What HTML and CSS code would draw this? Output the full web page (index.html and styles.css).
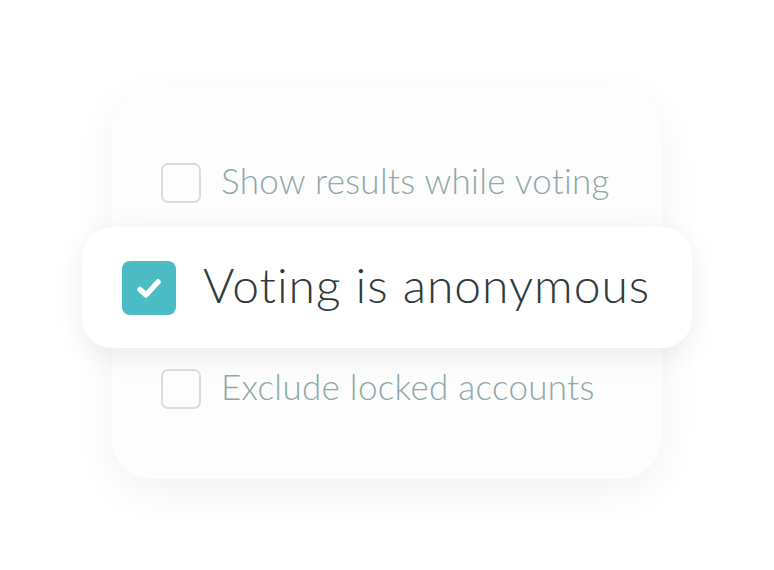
FILE: index.html
```html
<!DOCTYPE html>
<html>
<head>
<meta charset="utf-8">
<link rel="stylesheet" href="styles.css">
</head>
<body>
<div class="stage">
  <div class="card">
    <div class="option">
      <span class="box"></span>
      <span class="label">Show results while voting</span>
    </div>
    <div class="option option--active">
      <span class="box box--checked">
        <svg viewBox="0 0 54 54" width="54" height="54"><path d="M18 28.5 L24 34 L36 21" fill="none" stroke="#fff" stroke-width="5.5" stroke-linecap="round" stroke-linejoin="round"/></svg>
      </span>
      <span class="label label--active">Voting is anonymous</span>
    </div>
    <div class="option">
      <span class="box"></span>
      <span class="label">Exclude locked accounts</span>
    </div>
  </div>
</div>
</body>
</html>
```
FILE: styles.css
```css
html, body {
  margin: 0;
  padding: 0;
  background: #ffffff;
}
body {
  width: 774px;
  height: 570px;
  overflow: hidden;
  font-family: Lato, "Open Sans", sans-serif;
}
.stage {
  padding: 90px 0 0 112px;
}
.card {
  width: 549px;
  height: 389px;
  box-sizing: border-box;
  background: #fdfdfd;
  border-radius: 40px;
  box-shadow: 0 12px 44px rgba(0, 0, 0, 0.055);
  padding: 73px 0 0 49px;
  display: flex;
  flex-direction: column;
}
.option {
  display: flex;
  align-items: center;
  height: 40px;
}
.box {
  width: 40px;
  height: 40px;
  box-sizing: border-box;
  border: 2px solid #dcdcdc;
  border-radius: 7px;
  background: #fdfdfd;
  flex: none;
}
.label {
  margin-left: 20px;
  padding-bottom: 7px;
  font-size: 35px;
  line-height: 40px;
  font-weight: 300;
  color: #8fa8aa;
  letter-spacing: 0.3px;
  white-space: nowrap;
}
.option--active {
  margin: 24px -31px 21px -79px;
  height: 121px;
  padding-left: 40px;
  background: #ffffff;
  border-radius: 30px;
  box-shadow: 0 8px 30px rgba(0, 0, 0, 0.07);
}
.box--checked {
  width: 54px;
  height: 54px;
  border: none;
  border-radius: 8px;
  background: #4bbcc4;
  display: flex;
}
.label--active {
  margin-left: 27px;
  padding-bottom: 6px;
  font-size: 48px;
  line-height: 54px;
  color: #2e3a3c;
  letter-spacing: 1px;
}
```
